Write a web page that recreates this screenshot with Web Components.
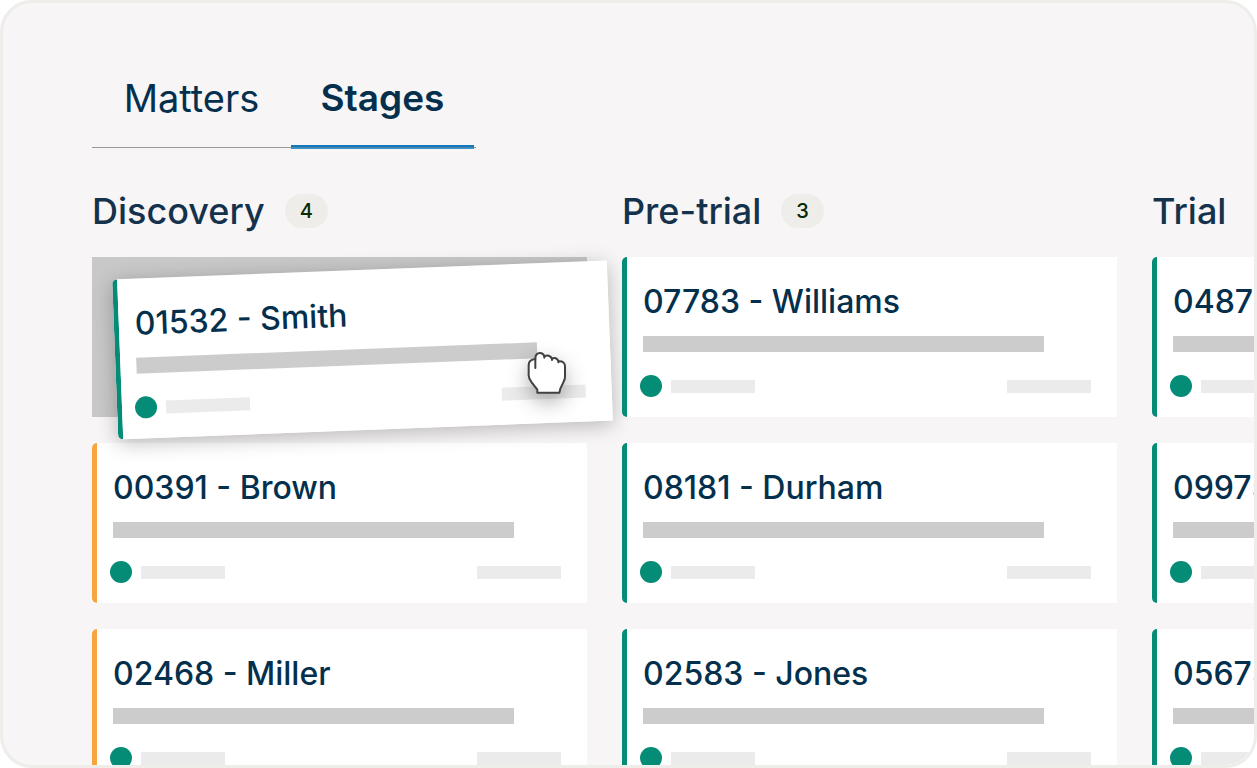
<!DOCTYPE html>
<html lang="en">
<head>
<meta charset="utf-8">
<meta name="viewport" content="width=device-width, initial-scale=1">
<title>Stages</title>
<style>
  body {
    margin: 0;
    background: #fff;
    color: #04304d;
    font-family: Inter, "Open Sans", sans-serif;
  }
</style>
</head>
<body>

<stage-board>
  <tab-bar slot="tabs" items="Matters,Stages" active="Stages"></tab-bar>

  <stage-column name="Discovery" count="4">
    <drop-slot>
      <matter-card>01532 - Smith</matter-card>
      <grab-cursor slot="cursor"></grab-cursor>
    </drop-slot>
    <matter-card color="orange">00391 - Brown</matter-card>
    <matter-card color="orange">02468 - Miller</matter-card>
  </stage-column>

  <stage-column name="Pre-trial" count="3">
    <matter-card>07783 - Williams</matter-card>
    <matter-card>08181 - Durham</matter-card>
    <matter-card>02583 - Jones</matter-card>
  </stage-column>

  <stage-column name="Trial">
    <matter-card>04877</matter-card>
    <matter-card>09975</matter-card>
    <matter-card>05675</matter-card>
  </stage-column>
</stage-board>

<script>
class StageBoard extends HTMLElement {

  constructor() {
    super();
    this.attachShadow({mode: 'open'});
  }

  connectedCallback() {
    this.shadowRoot.innerHTML = `
      <style>
        :host {
          display: block;
          box-sizing: border-box;
          height: 100vh;
          padding: 65px 0 0 89px;
          border: 3px solid #eeede9;
          border-radius: 32px;
          background: #f7f5f6;
          overflow: hidden;
        }
        .columns {
          display: grid;
          grid-auto-flow: column;
          grid-auto-columns: 42.6%;
          gap: 35px;
          margin-top: 36px;
        }
      </style>
      <slot name="tabs"></slot>
      <main class="columns"><slot></slot></main>
    `;
  }
}

class TabBar extends HTMLElement {

  constructor() {
    super();
    this.attachShadow({mode: 'open'});
  }

  connectedCallback() {
    const active = this.getAttribute('active');
    const tabs = this.getAttribute('items').split(',').map(name =>
      `<button type="button" role="tab" aria-selected="${name === active}">${name}</button>`
    ).join('');

    this.shadowRoot.innerHTML = `
      <style>
        :host {
          display: block;
        }
        .tabs {
          display: inline-grid;
          grid-template-columns: 199px 183px;
          padding-right: 2px;
          background: linear-gradient(#999, #999) 0 79px / 100% 1px no-repeat;
          vertical-align: top;
        }
        button {
          height: 81px;
          padding: 0 0 22px;
          border: 0;
          background: none;
          color: inherit;
          font-family: inherit;
          font-size: 38px;
          line-height: 58px;
        }
        /* the grey rule of the bar runs through the blue marker */
        button[aria-selected="true"] {
          background: linear-gradient(#1379bd 2px, #4d87a8 2px 3px, #3a93cc 3px) 0 100% / 100% 4px no-repeat;
          font-size: 37px;
          font-weight: 600;
        }
      </style>
      <div class="tabs" role="tablist">${tabs}</div>
    `;
  }
}

class StageColumn extends HTMLElement {

  constructor() {
    super();
    this.attachShadow({mode: 'open'});
  }

  connectedCallback() {
    const count = this.getAttribute('count');

    this.shadowRoot.innerHTML = `
      <style>
        :host {
          display: block;
          isolation: isolate;
        }
        header {
          display: flex;
          align-items: center;
          gap: 20px;
          height: 52px;
          margin-bottom: 20px;
        }
        h2 {
          margin: 0;
          color: #15324c;
          font-size: 36px;
          font-weight: 500;
          line-height: 52px;
        }
        .count {
          padding: 0 15px;
          border-radius: 17px;
          background: #eeede9;
          color: #062b06;
          font-size: 20px;
          font-weight: 500;
          line-height: 34px;
        }
        .cards {
          display: flex;
          flex-direction: column;
          gap: 26px;
        }
      </style>
      <header>
        <h2>${this.getAttribute('name')}</h2>
        ${count ? `<span class="count">${count}</span>` : ''}
      </header>
      <div class="cards"><slot></slot></div>
    `;
  }
}

class MatterCard extends HTMLElement {

  constructor() {
    super();
    this.attachShadow({mode: 'open'});
  }

  connectedCallback() {
    this.shadowRoot.innerHTML = `
      <style>
        :host {
          display: block;
          box-sizing: border-box;
          height: 160px;
          padding: 20px 26px 20px 13px;
          border-left: 5px solid #048c76;
          border-radius: 5px 0 0 5px;
          background: #fff;
        }
        :host([color="orange"]) {
          border-left-color: #f6a53f;
        }
        h3 {
          margin: 0 0 9px 3px;
          font-size: 32px;
          font-weight: 500;
          line-height: 50px;
          white-space: nowrap;
        }
        .line {
          width: 89%;
          height: 16px;
          margin: 0 0 23px 3px;
          background: #ccc;
        }
        .meta {
          display: flex;
          align-items: center;
          gap: 9px;
        }
        .dot {
          width: 22px;
          height: 22px;
          border-radius: 50%;
          background: #048c76;
        }
        .chip {
          width: 84px;
          height: 13px;
          background: #ebebeb;
        }
        .chip:last-child {
          margin-left: auto;
        }
      </style>
      <h3><slot></slot></h3>
      <div class="line"></div>
      <div class="meta">
        <span class="dot"></span>
        <span class="chip"></span>
        <span class="chip"></span>
      </div>
    `;
  }
}

// the empty place in the column, with the card that is being dragged over it
class DropSlot extends HTMLElement {

  constructor() {
    super();
    this.attachShadow({mode: 'open'});
  }

  connectedCallback() {
    this.shadowRoot.innerHTML = `
      <style>
        :host {
          display: block;
          position: relative;
          z-index: 1;
          height: 160px;
          background: #c8c8c8;
        }
        .dragged {
          position: absolute;
          top: 13px;
          left: 23px;
          width: 100%;
          border-radius: 5px 0 0 5px;
          transform: rotate(-2.2deg);
          box-shadow: 0 4px 20px rgba(0, 0, 0, 0.26);
        }
        .cursor {
          position: absolute;
          top: 95px;
          right: 21px;
        }
      </style>
      <div class="dragged"><slot></slot></div>
      <div class="cursor"><slot name="cursor"></slot></div>
    `;
  }
}

class GrabCursor extends HTMLElement {

  constructor() {
    super();
    this.attachShadow({mode: 'open'});
  }

  connectedCallback() {
    this.shadowRoot.innerHTML = `
      <style>
        :host {
          display: block;
        }
        svg {
          display: block;
          overflow: visible;
          filter: drop-shadow(0 8px 10px rgba(0, 0, 0, 0.3));
        }
      </style>
      <svg width="40" height="43" viewBox="0 0 120 129" fill="#fff" stroke="#414042" stroke-width="6" stroke-linejoin="round" stroke-linecap="round">
        <path d="M34 122V113L17 91Q8 81 8 70V39Q8 23 28 21Q28 3 42 3Q52 3 55 13Q70 6 78 20Q91 14 98 28Q117 27 117 43V74Q117 82 112 91L103 110L100 122Z"/>
        <path d="M28 21V48M55 13V17M78 20V24M98 28L97 31" fill="none"/>
      </svg>
    `;
  }
}

customElements.define('stage-board', StageBoard);
customElements.define('tab-bar', TabBar);
customElements.define('stage-column', StageColumn);
customElements.define('matter-card', MatterCard);
customElements.define('drop-slot', DropSlot);
customElements.define('grab-cursor', GrabCursor);
</script>
</body>
</html>
